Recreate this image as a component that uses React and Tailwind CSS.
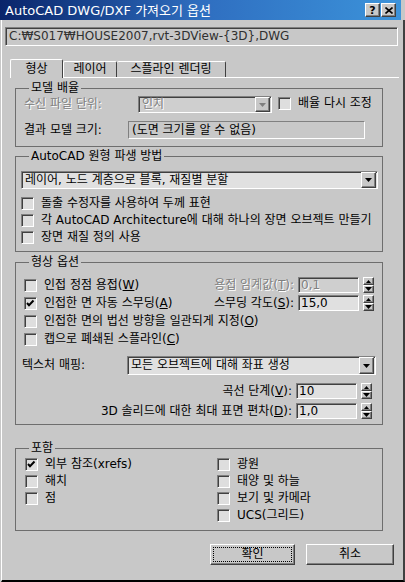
import React from 'react';

const raised =
  'border border-t-white border-l-white border-r-[#404040] border-b-[#404040] shadow-[inset_-1px_-1px_0_#808080]';
const sunken =
  'border border-t-[#808080] border-l-[#808080] border-r-white border-b-white shadow-[inset_1px_1px_0_#404040]';
const dim = 'text-[#808080] [text-shadow:1px_1px_0_#ffffff]';

const DownArrow = ({ color = '#000' }) => (
  <svg width="7" height="4" viewBox="0 0 7 4">
    <path d="M0 0h7L3.5 4z" fill={color} />
  </svg>
);

const Check = ({ checked, label }) => (
  <div className="flex items-center h-[17px]">
    <div className={`w-[13px] h-[13px] shrink-0 bg-[#dedede] flex items-center justify-center ${sunken}`}>
      {checked && (
        <svg width="9" height="9" viewBox="0 0 9 9">
          <path d="M1 4l2 2.2L7.5 1.5" stroke="#000" strokeWidth="2" fill="none" />
        </svg>
      )}
    </div>
    <span className="ml-[7px] whitespace-nowrap">{label}</span>
  </div>
);

const Combo = ({ value, width, height = 'h-[18px]', disabled }) => (
  <div className={`${width} ${height} shrink-0 flex items-center ${disabled ? 'bg-[#cfcfcf]' : 'bg-[#e0e0e0]'} ${sunken}`}>
    <span className={`flex-1 min-w-0 pl-[3px] whitespace-nowrap ${disabled ? dim : ''}`}>{value}</span>
    <div className={`w-[15px] h-full mr-px shrink-0 flex items-center justify-center bg-[#c8c8c8] ${raised}`}>
      <DownArrow color={disabled ? '#808080' : '#000'} />
    </div>
  </div>
);

const Spin = () => (
  <div className="flex flex-col w-[11px] h-[16px] ml-[4px]">
    <div className={`flex-1 flex items-center justify-center bg-[#c8c8c8] ${raised}`}>
      <svg width="5" height="3" viewBox="0 0 5 3">
        <path d="M0 3h5L2.5 0z" fill="#000" />
      </svg>
    </div>
    <div className={`flex-1 flex items-center justify-center bg-[#c8c8c8] ${raised}`}>
      <DownArrow />
    </div>
  </div>
);

const NumField = ({ value, disabled }) => (
  <div className="flex items-center shrink-0">
    <div className={`w-[61px] h-[16px] flex items-center pl-[2px] ${disabled ? 'bg-[#cfcfcf]' : 'bg-[#e0e0e0]'} ${sunken}`}>
      <span className={disabled ? dim : ''}>{value}</span>
    </div>
    <Spin />
  </div>
);

const Group = ({ title, className = '', children }) => (
  <fieldset className={`ml-[13px] w-[368px] min-w-0 border border-[#6e6e6e] px-[8px] ${className}`}>
    <legend className="ml-[5px] px-[2px] leading-[15px]">{title}</legend>
    {children}
  </fieldset>
);

const App = () => {
  return (
    <div className="w-[405px] h-[582px] bg-[#c8c8c8] flex flex-col text-[12px] leading-[15px] text-black font-['DejaVu_Sans','Noto_Sans_CJK_KR',sans-serif] overflow-hidden">
      <div className="h-[20px] shrink-0 mr-[4px] flex items-center pl-[5px] pr-[5px] bg-linear-to-r from-[#0a246a] via-[#2f6ec0] to-[#3c93da]">
        <span className="text-white text-[13px]">AutoCAD DWG/DXF 가져오기 옵션</span>
        <div className="ml-auto flex gap-px">
          <div className={`w-[15px] h-[14px] bg-[#c8c8c8] flex items-center justify-center font-bold text-[11px] leading-none ${raised}`}>?</div>
          <div className={`w-[15px] h-[14px] bg-[#c8c8c8] flex items-center justify-center ${raised}`}>
            <svg width="8" height="7" viewBox="0 0 8 7">
              <path d="M0.5 0.5l7 6M7.5 0.5l-7 6" stroke="#000" strokeWidth="1.6" />
            </svg>
          </div>
        </div>
      </div>

      <div className="flex-1 flex flex-col ml-px border-l border-l-white border-r-2 border-r-[#404040] border-b-2 border-b-black">
        <div className={`mt-[7px] ml-[3px] w-[393px] h-[19px] flex items-center pl-[3px] text-[#303030] ${sunken}`}>
          C:₩S017₩HOUSE2007,rvt-3DView-{'{3D}'},DWG
        </div>

        <div className="mt-[14px] ml-[8px] mr-[4px] flex items-end h-[18px] border-b border-b-white">
          <div className="w-[53px] h-[19px] -mb-px bg-[#c8c8c8] border-t border-l border-white border-r border-r-[#404040] rounded-t-[2px] flex items-center justify-center">
            형상
          </div>
          <div className="w-[54px] h-[16px] border-t border-l border-white border-r border-r-[#404040] rounded-t-[2px] flex items-center justify-center">
            레이어
          </div>
          <div className="w-[109px] h-[16px] border-t border-white border-r border-r-[#404040] rounded-t-[2px] flex items-center justify-center">
            스플라인 렌더링
          </div>
        </div>

        <Group title="모델 배율" className="mt-[3px] pb-[7px]">
          <div className="flex items-center h-[17px]">
            <span className={`w-[114px] shrink-0 ${dim}`}>수신 파일 단위:</span>
            <Combo value="인치" width="w-[134px]" height="h-[17px]" disabled />
            <div className="ml-[6px] -mt-[2px]">
              <Check label="배율 다시 조정" />
            </div>
          </div>
          <div className="flex items-center h-[18px] mt-[8px]">
            <span className="w-[104px] shrink-0">결과 모델 크기:</span>
            <div className="w-[237px] h-[18px] flex items-center pl-[3px] border border-t-[#808080] border-l-[#808080] border-r-white border-b-white">
              (도면 크기를 알 수 없음)
            </div>
          </div>
        </Group>

        <Group title="AutoCAD 원형 파생 방법" className="mt-[2px] pb-[5px]">
          <div className="mt-[7px] -ml-[3px]">
            <Combo value="레이어, 노드 계층으로 블록, 재질별 분할" width="w-[357px]" />
          </div>
          <div className="mt-[6px] -ml-[3px] flex flex-col">
            <Check label="돌출 수정자를 사용하여 두께 표현" />
            <Check label="각 AutoCAD Architecture에 대해 하나의 장면 오브젝트 만들기" />
            <Check label="장면 재질 정의 사용" />
          </div>
        </Group>

        <Group title="형상 옵션" className="mt-[3px] pb-[5px]">
          <div className="mt-[6px] flex flex-col">
            <div className="flex items-center h-[18px]">
              <Check label={<>인접 정점 용접(<u>W</u>)</>} />
              <span className={`ml-auto mr-[4px] ${dim}`}>
                용접 임계값(<u>T</u>):
              </span>
              <NumField value="0,1" disabled />
            </div>
            <div className="flex items-center h-[18px]">
              <Check checked label={<>인접한 면 자동 스무딩(<u>A</u>)</>} />
              <span className="ml-auto mr-[4px]">
                스무딩 각도(<u>S</u>):
              </span>
              <NumField value="15,0" />
            </div>
            <div className="flex items-center h-[18px]">
              <Check label={<>인접한 면의 법선 방향을 일관되게 지정(<u>O</u>)</>} />
            </div>
            <div className="flex items-center h-[18px]">
              <Check label={<>캡으로 폐쇄된 스플라인(<u>C</u>)</>} />
            </div>
          </div>
          <div className="mt-[8px] -ml-[2px] flex items-center">
            <span className="w-[105px] shrink-0">텍스처 매핑:</span>
            <Combo value="모든 오브젝트에 대해 좌표 생성" width="w-[249px]" height="h-[19px]" />
          </div>
          <div className="mt-[8px] flex items-center justify-end h-[16px] pr-[2px]">
            <span className="mr-[4px]">
              곡선 단계(<u>V</u>):
            </span>
            <NumField value="10" />
          </div>
          <div className="mt-[4px] flex items-center justify-end h-[16px] pr-[2px]">
            <span className="mr-[4px]">
              3D 솔리드에 대한 최대 표면 편차(<u>D</u>):
            </span>
            <NumField value="1,0" />
          </div>
        </Group>

        <Group title="포함" className="mt-[16px] pb-[6px]">
          <div className="grid grid-cols-[192px_1fr] pl-px">
            <div className="flex flex-col">
              <Check checked label="외부 참조(xrefs)" />
              <Check label="해치" />
              <Check label="점" />
            </div>
            <div className="flex flex-col">
              <Check label="광원" />
              <Check label="태양 및 하늘" />
              <Check label="보기 및 카메라" />
              <Check label="UCS(그리드)" />
            </div>
          </div>
        </Group>

        <div className="mt-[13px] flex justify-end gap-[11px] pr-[9px]">
          <div className={`w-[85px] h-[21px] p-[2px] bg-[#c8c8c8] ${raised}`}>
            <div className="w-full h-full border border-dotted border-black flex items-center justify-center">
              확인
            </div>
          </div>
          <div className={`w-[88px] h-[21px] bg-[#c8c8c8] flex items-center justify-center ${raised}`}>
            취소
          </div>
        </div>
      </div>
    </div>
  );
};

export default App;
